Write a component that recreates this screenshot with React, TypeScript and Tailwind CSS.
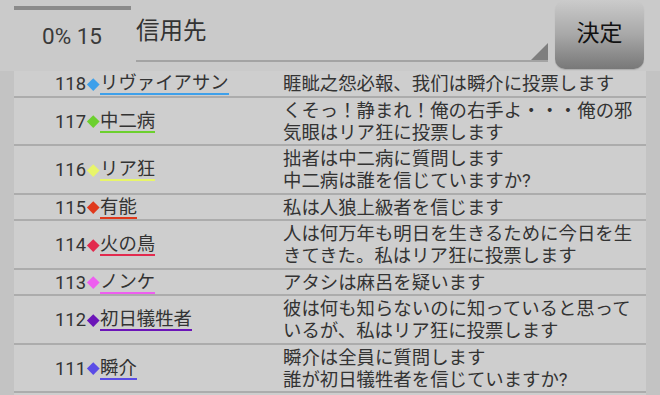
import React from "react";

type Row = { n: number; color: string; name: string; lines: string[] };

const rows: Row[] = [
  { n: 118, color: "#3ea0ea", name: "リヴァイアサン", lines: ["睚眦之怨必報、我们は瞬介に投票します"] },
  { n: 117, color: "#6cd02e", name: "中二病", lines: ["くそっ！静まれ！俺の右手よ・・・俺の邪", "気眼はリア狂に投票します"] },
  { n: 116, color: "#e8f56a", name: "リア狂", lines: ["拙者は中二病に質問します", "中二病は誰を信じていますか?"] },
  { n: 115, color: "#e0391c", name: "有能", lines: ["私は人狼上級者を信じます"] },
  { n: 114, color: "#e22a4e", name: "火の鳥", lines: ["人は何万年も明日を生きるために今日を生", "きてきた。私はリア狂に投票します"] },
  { n: 113, color: "#ee5ef0", name: "ノンケ", lines: ["アタシは麻呂を疑います"] },
  { n: 112, color: "#6b15b8", name: "初日犠牲者", lines: ["彼は何も知らないのに知っていると思って", "いるが、私はリア狂に投票します"] },
  { n: 111, color: "#5a4ce6", name: "瞬介", lines: ["瞬介は全員に質問します", "誰が初日犠牲者を信じていますか?"] },
];

const font = { fontFamily: '"Roboto", "Noto Sans CJK JP", sans-serif' };

export default function App() {
  return (
    <div className="w-[660px] h-[395px] overflow-hidden bg-[#c4c4c4] text-[#333333]" style={font}>
      <div className="flex h-[71px] bg-[#cacaca]">
        <div className="w-[136px] shrink-0 pl-[14px] flex flex-col">
          <div className="mt-[6px] h-[4px] w-[117px] bg-[#8b8b8b]" />
          <div className="mt-[12px] ml-[28px] text-[22.5px] leading-[28px] text-[#3a3a3a] whitespace-nowrap">0% 15</div>
        </div>
        <div className="relative w-[412px] h-[62px] shrink-0 border-b-2 border-[#a3a3a3]">
          <div className="pt-[16px] text-[23.5px] leading-[30px] text-[#333333]">信用先</div>
          <svg className="absolute right-0 bottom-0" width="17" height="17" viewBox="0 0 17 17">
            <polygon points="17,0 17,17 0,17" fill="#7e7e7e" />
          </svg>
        </div>
        <div className="ml-[7px] w-[89px] h-[69px] shrink-0 rounded-[10px] bg-gradient-to-b from-[#cbcbcb] via-[#a8a8a8] to-[#787878] flex items-center justify-center text-[23px] text-[#111111] shadow-[0_1px_1px_rgba(0,0,0,0.15)]">
          決定
        </div>
      </div>
      <div className="px-[14px] bg-[#c3c3c3] h-[324px]">
        <div className="bg-[#cecece] h-full">
          {rows.map((r) => (
            <div key={r.n} className="flex border-b-2 border-[#acacac] pt-[2px] pb-[0.5px]">
              <div className="w-[269px] shrink-0 flex items-center text-[18.4px]">
                <span className="w-[72px] text-right leading-[20px]">{r.n}</span>
                <span className="w-[14px] flex justify-center items-center">
                  <span className="block w-[8.5px] h-[8.5px] rotate-45" style={{ backgroundColor: r.color }} />
                </span>
                <span className="leading-[20px] border-b-2 whitespace-nowrap" style={{ borderColor: r.color }}>
                  {r.name}
                </span>
              </div>
              <div className="text-[18.4px] leading-[22px]">
                {r.lines.map((l, i) => (
                  <div key={i} className="whitespace-nowrap">{l}</div>
                ))}
              </div>
            </div>
          ))}
        </div>
      </div>
    </div>
  );
}
